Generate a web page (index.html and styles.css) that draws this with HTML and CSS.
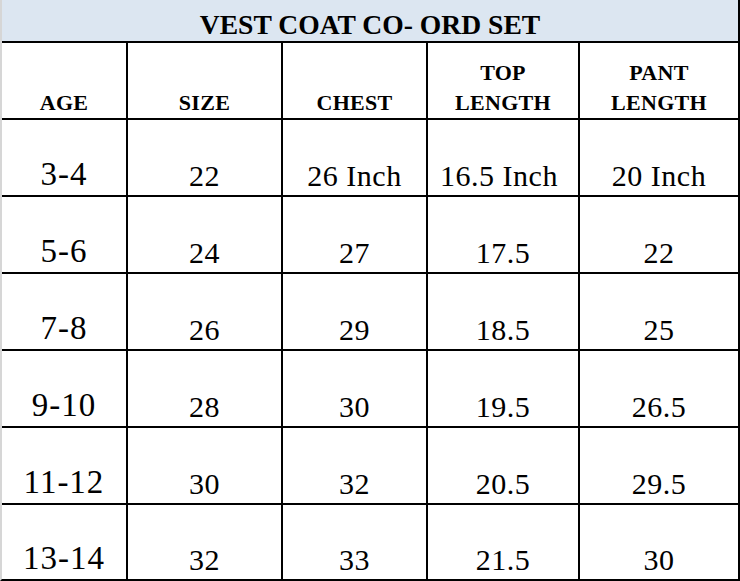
FILE: index.html
```html
<!DOCTYPE html>
<html>
<head>
<meta charset="utf-8">
<link rel="stylesheet" href="styles.css">
</head>
<body>
<div class="sheet">
  <div class="title">VEST COAT CO- ORD SET</div>
  <div class="head">AGE</div>
  <div class="head">SIZE</div>
  <div class="head">CHEST</div>
  <div class="head">TOP<br>LENGTH</div>
  <div class="head">PANT<br>LENGTH</div>

  <div class="cell age">3-4</div>
  <div class="cell">22</div>
  <div class="cell">26 Inch</div>
  <div class="cell shift">16.5 Inch</div>
  <div class="cell">20 Inch</div>

  <div class="cell age">5-6</div>
  <div class="cell">24</div>
  <div class="cell">27</div>
  <div class="cell">17.5</div>
  <div class="cell">22</div>

  <div class="cell age">7-8</div>
  <div class="cell">26</div>
  <div class="cell">29</div>
  <div class="cell">18.5</div>
  <div class="cell">25</div>

  <div class="cell age">9-10</div>
  <div class="cell">28</div>
  <div class="cell">30</div>
  <div class="cell">19.5</div>
  <div class="cell">26.5</div>

  <div class="cell age">11-12</div>
  <div class="cell">30</div>
  <div class="cell">32</div>
  <div class="cell">20.5</div>
  <div class="cell">29.5</div>

  <div class="cell age">13-14</div>
  <div class="cell">32</div>
  <div class="cell">33</div>
  <div class="cell">21.5</div>
  <div class="cell">30</div>
</div>
</body>
</html>
```
FILE: styles.css
```css
html, body {
  margin: 0;
  padding: 0;
  background: #ffffff;
}
body {
  font-family: "Liberation Serif", "Times New Roman", serif;
  color: #000;
}
.sheet {
  display: grid;
  width: 736px;
  grid-template-columns: 124px 153px 143px 150px 158px;
  grid-template-rows: 41px 75px 75px 75px 75px 75px 75px 74px;
  gap: 2px;
  background: #000;
  border-left: 2px solid #d6d6d6;
  border-right: 2px solid #000;
  border-bottom: 2px solid #000;
}
.title {
  grid-column: 1 / -1;
  background: #dce6f1;
  display: flex;
  align-items: flex-end;
  justify-content: center;
  font-weight: bold;
  font-size: 27.6px;
  line-height: 1;
  padding-bottom: 2px;
}
.head {
  background: #fff;
  display: flex;
  align-items: flex-end;
  justify-content: center;
  text-align: center;
  font-weight: bold;
  font-size: 22px;
  line-height: 30px;
  letter-spacing: 0.3px;
}
.cell {
  background: #fff;
  display: flex;
  align-items: flex-end;
  justify-content: center;
  font-size: 30px;
  line-height: 1;
  padding-bottom: 4px;
  letter-spacing: 0.5px;
}
.cell.shift {
  padding-right: 8px;
}
.cell.age {
  font-size: 33px;
  letter-spacing: 1px;
}
```
